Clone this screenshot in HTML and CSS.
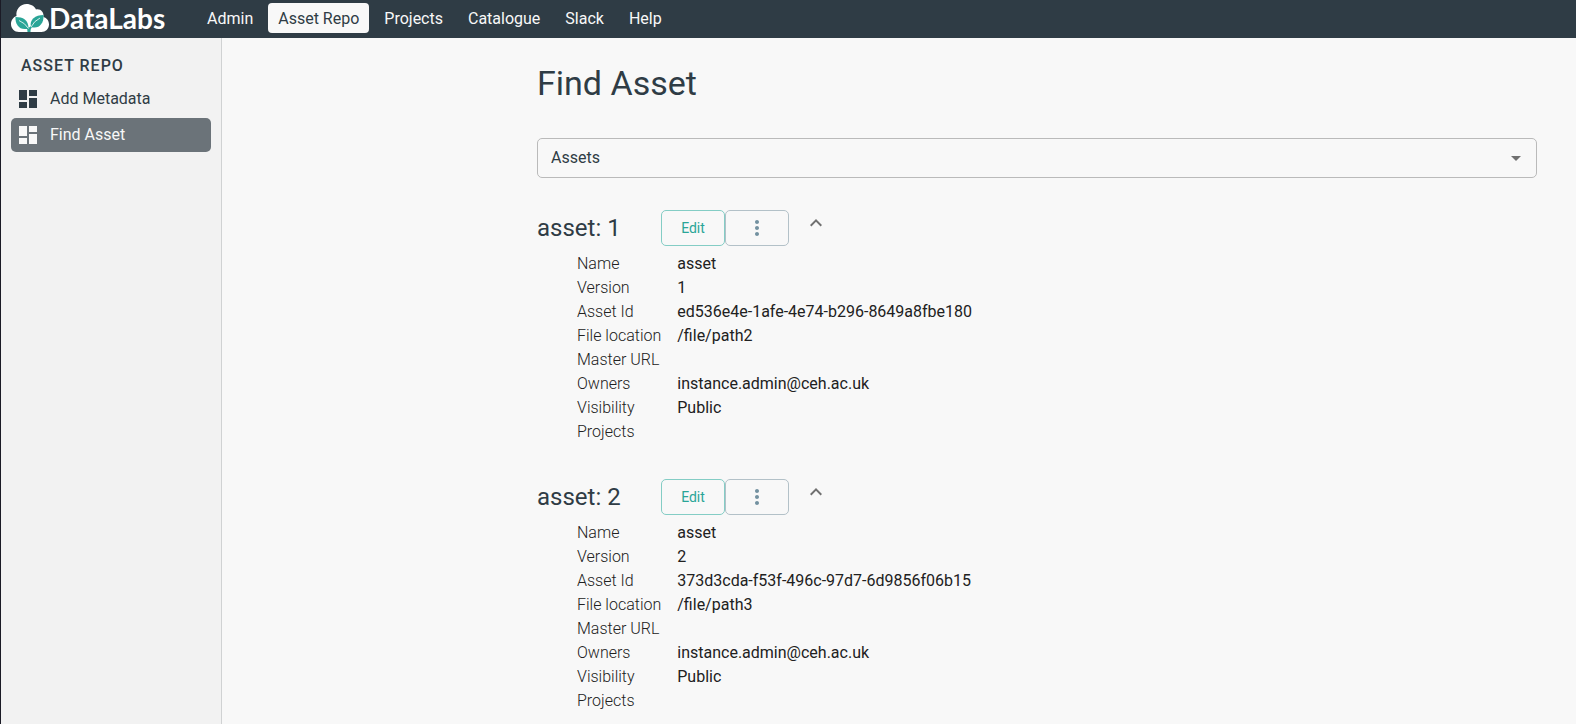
FILE: index.html
```html
<!DOCTYPE html>
<html lang="en">
<head>
<meta charset="utf-8">
<meta name="viewport" content="width=device-width, initial-scale=1">
<title>DataLabs - Find Asset</title>
<link rel="stylesheet" href="styles.css">
</head>
<body>
<svg width="0" height="0" class="sprite" aria-hidden="true">
  <symbol id="dashboard" viewBox="0 0 24 24"><path d="M3 13h8V3H3v10zm0 8h8v-6H3v6zm10 0h8V11h-8v10zm0-18v6h8V3h-8z"/></symbol>
  <symbol id="more" viewBox="0 0 24 24"><path d="M12 8c1.1 0 2-.9 2-2s-.9-2-2-2-2 .9-2 2 .9 2 2 2zm0 2c-1.1 0-2 .9-2 2s.9 2 2 2 2-.9 2-2-.9-2-2-2zm0 6c-1.1 0-2 .9-2 2s.9 2 2 2 2-.9 2-2-.9-2-2-2z"/></symbol>
  <symbol id="expand-less" viewBox="0 0 24 24"><path d="M12 8l-6 6 1.41 1.41L12 10.83l4.59 4.58L18 14z"/></symbol>
</svg>
<header class="topbar">
  <a class="logo" href="#">
    <svg class="logo-mark" viewBox="0 0 38 28" aria-hidden="true">
      <path fill="#fff" d="M8 28C3.500 28 0 24.500 0 20C0 16 2.500 13 5.500 12C4.500 5 9.500 0 15.500 0C20 0 23.500 2.300 25 5.500C29.500 4.500 33 8 32.500 13C36 14 38 17 38 20.500C38 25 34.500 28 30.500 28Z"/>
      <path fill="#2aa597" d="M4.500 13C12 13 17.500 15.500 17.500 24.500C9 27 4 21 4.500 13Z"/>
      <path fill="#2aa597" d="M32.500 11C33 20 27.500 25.500 20 23C18 15.500 24.500 11 32.500 11Z"/>
      <path fill="#2aa597" d="M16.500 28L16 23.500H18L20 22L21 23C19.800 24.500 19.500 26 19.500 28Z"/>
      <path fill="none" stroke="#fff" stroke-width=".8" d="M8 16.500Q14 19 17.500 24.500M29 14Q23 17 20 23"/>
    </svg>
    <span class="logo-text">DataLabs</span>
  </a>
  <nav class="nav">
    <a href="#">Admin</a>
    <a href="#" class="active" aria-current="page">Asset Repo</a>
    <a href="#">Projects</a>
    <a href="#">Catalogue</a>
    <a href="#">Slack</a>
    <a href="#">Help</a>
  </nav>
</header>
<div class="layout">
  <aside class="sidebar">
    <h2 class="sidebar-title">ASSET REPO</h2>
    <nav class="side-nav">
      <a href="#"><svg class="icon"><use href="#dashboard"/></svg>Add Metadata</a>
      <a href="#" class="active" aria-current="page"><svg class="icon"><use href="#dashboard"/></svg>Find Asset</a>
    </nav>
  </aside>
  <main class="main">
    <div class="content">
      <h1 class="title">Find Asset</h1>
      <div class="select-box">
        <select class="select" aria-label="Asset type"><option>Assets</option></select>
        <svg class="select-arrow" viewBox="0 0 24 24" aria-hidden="true"><path d="M7 10l5 5 5-5z"/></svg>
      </div>
      <div class="assets">
        <section class="asset">
          <div class="asset-head">
            <h2 class="asset-name">asset: 1</h2>
            <button class="btn btn-edit" type="button">Edit</button>
            <button class="btn btn-more" type="button" aria-label="More"><svg class="more-icon"><use href="#more"/></svg></button>
            <button class="toggle" type="button" aria-label="Collapse"><svg class="icon"><use href="#expand-less"/></svg></button>
          </div>
          <dl class="details">
            <dt>Name</dt><dd>asset</dd>
            <dt>Version</dt><dd>1</dd>
            <dt>Asset Id</dt><dd>ed536e4e-1afe-4e74-b296-8649a8fbe180</dd>
            <dt>File location</dt><dd>/file/path2</dd>
            <dt>Master URL</dt><dd></dd>
            <dt>Owners</dt><dd>instance.admin@ceh.ac.uk</dd>
            <dt>Visibility</dt><dd>Public</dd>
            <dt>Projects</dt><dd></dd>
          </dl>
        </section>
        <section class="asset">
          <div class="asset-head">
            <h2 class="asset-name">asset: 2</h2>
            <button class="btn btn-edit" type="button">Edit</button>
            <button class="btn btn-more" type="button" aria-label="More"><svg class="more-icon"><use href="#more"/></svg></button>
            <button class="toggle" type="button" aria-label="Collapse"><svg class="icon"><use href="#expand-less"/></svg></button>
          </div>
          <dl class="details">
            <dt>Name</dt><dd>asset</dd>
            <dt>Version</dt><dd>2</dd>
            <dt>Asset Id</dt><dd>373d3cda-f53f-496c-97d7-6d9856f06b15</dd>
            <dt>File location</dt><dd>/file/path3</dd>
            <dt>Master URL</dt><dd></dd>
            <dt>Owners</dt><dd>instance.admin@ceh.ac.uk</dd>
            <dt>Visibility</dt><dd>Public</dd>
            <dt>Projects</dt><dd></dd>
          </dl>
        </section>
      </div>
    </div>
  </main>
</div>
</body>
</html>
```
FILE: styles.css
```css
* { box-sizing: border-box; }
body {
  margin: 0;
  min-height: 100vh;
  display: flex;
  flex-direction: column;
  border-left: 1px solid #1b1b26;
  background: #f8f8f8;
  color: #2f3c45;
  font: 400 16px/24px Roboto, sans-serif;
}
h1, h2, dl, dd { margin: 0; font-weight: 400; }
a { color: inherit; text-decoration: none; }
button { font-family: inherit; background: none; cursor: pointer; }
.sprite { position: absolute; }
.icon { width: 24px; height: 24px; fill: currentColor; display: block; }

.topbar {
  display: flex;
  align-items: center;
  gap: 32px;
  height: 38px;
  padding: 0 10px 2px;
  background: #2f3c45;
  color: #f8f8f8;
}
.logo { display: flex; align-items: center; width: 154px; color: #fff; }
.logo-mark { width: 38px; height: 28px; flex: none; }
.logo-text { font: 700 28px/34px Lato, sans-serif; }
.nav { display: flex; gap: 5px; }
.nav a { padding: 4px 10px 2px; border-radius: 4px; white-space: nowrap; }
.nav .active { background: #f8f8f8; color: #2f3c45; }

.layout { display: flex; flex: 1; }
.sidebar {
  width: 221px;
  flex: none;
  padding: 16px 10px;
  background: #f2f2f2;
  border-right: 1px solid #d0d2d3;
}
.sidebar-title {
  padding-left: 10px;
  font-size: 16px;
  line-height: 24px;
  font-weight: 500;
  letter-spacing: 1px;
}
.side-nav { display: flex; flex-direction: column; gap: 2px; margin-top: 4px; }
.side-nav a { display: flex; gap: 10px; padding: 5px; border-radius: 5px; }
.side-nav .active { background: #6b7379; color: #f8f8f8; }

.main { flex: 1; padding: 24px 39px; }
.content { max-width: 1000px; margin-left: auto; }
.title { font-size: 34px; line-height: 42px; }
.select-box { position: relative; margin-top: 34px; }
.select {
  appearance: none;
  display: block;
  width: 100%;
  height: 40px;
  padding: 0 36px 0 13px;
  border: 1px solid #bababa;
  border-radius: 5px;
  background: transparent;
  color: inherit;
  font: inherit;
}
.select-arrow {
  position: absolute;
  top: 8px;
  right: 9px;
  width: 24px;
  height: 24px;
  fill: #707070;
  pointer-events: none;
}
.assets { display: flex; flex-direction: column; gap: 35px; margin-top: 32px; }
.asset-head { display: flex; align-items: center; }
.asset-name { width: 124px; font-size: 24px; line-height: 32px; }
.btn {
  width: 64px;
  height: 36px;
  padding: 0;
  border: 1px solid;
  border-radius: 5px;
  font-size: 14px;
  line-height: 24px;
}
.btn-edit { color: #2aa597; border-color: #84cdc5; }
.btn-more { color: #7391a0; border-color: #b3c1c8; }
.more-icon { display: block; width: 24px; height: 24px; margin: auto; fill: currentColor; }
.toggle { align-self: flex-start; margin-left: 15px; padding: 1px 0 0; border: 0; color: #707070; }
.details {
  display: grid;
  grid-template-columns: max-content 1fr;
  grid-auto-rows: 24px;
  column-gap: 16px;
  margin-top: 6px;
  padding-left: 40px;
  color: #212121;
}
.details dt { font-weight: 300; }
```
